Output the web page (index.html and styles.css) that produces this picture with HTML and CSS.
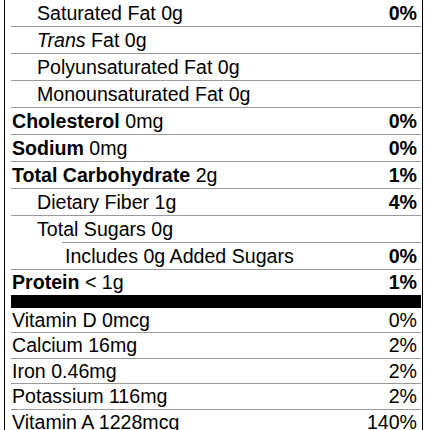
FILE: index.html
```html
<!DOCTYPE html>
<html>
<head>
<meta charset="utf-8">
<link rel="stylesheet" href="styles.css">
</head>
<body>
<div class="label">
  <div class="row first sub"><span>Saturated Fat 0g</span><span class="dv">0%</span></div>
  <div class="row sub"><span><i>Trans</i> Fat 0g</span></div>
  <div class="row sub"><span>Polyunsaturated Fat 0g</span></div>
  <div class="row sub"><span>Monounsaturated Fat 0g</span></div>
  <div class="row"><span><b>Cholesterol</b> 0mg</span><span class="dv">0%</span></div>
  <div class="row"><span><b>Sodium</b> 0mg</span><span class="dv">0%</span></div>
  <div class="row"><span><b>Total Carbohydrate</b> 2g</span><span class="dv">1%</span></div>
  <div class="row sub"><span>Dietary Fiber 1g</span><span class="dv">4%</span></div>
  <div class="row sub"><span>Total Sugars 0g</span></div>
  <div class="row subsub"><span>Includes 0g Added Sugars</span><span class="dv">0%</span></div>
  <div class="row protein"><span><b>Protein</b> &lt; 1g</span><span class="dv">1%</span></div>
  <div class="bar"></div>
  <div class="row vit first"><span>Vitamin D 0mcg</span><span>0%</span></div>
  <div class="row vit"><span>Calcium 16mg</span><span>2%</span></div>
  <div class="row vit"><span>Iron 0.46mg</span><span>2%</span></div>
  <div class="row vit"><span>Potassium 116mg</span><span>2%</span></div>
  <div class="row vit"><span>Vitamin A 1228mcg</span><span>140%</span></div>
</div>
</body>
</html>
```

FILE: styles.css
```css
html, body {
  margin: 0;
  padding: 0;
  background: #fff;
}
body {
  font-family: "Liberation Sans", Arial, sans-serif;
  font-size: 19.6px;
  color: #000;
  overflow: hidden;
  height: 430px;
}
.label {
  margin: 0 7px 0 4px;
  border-left: 1px solid #000;
  border-right: 1px solid #000;
  padding: 0 1px 0 6px;
  min-height: 440px;
}
.row {
  display: flex;
  justify-content: space-between;
  border-top: 1px solid #9a9a9a;
  line-height: 26px;
  padding: 0 4px 0 1px;
  white-space: nowrap;
}
.row.first {
  border-top: none;
}
.row.sub {
  padding-left: 26px;
}
.row.subsub {
  margin-left: 51px;
  padding-left: 3px;
}
.row.protein {
  line-height: 25px;
}
.dv {
  font-weight: bold;
}
.bar {
  height: 13px;
  background: #000;
}
.row.vit {
  line-height: 24.5px;
}
.row.vit.first {
  line-height: 24px;
}
```
